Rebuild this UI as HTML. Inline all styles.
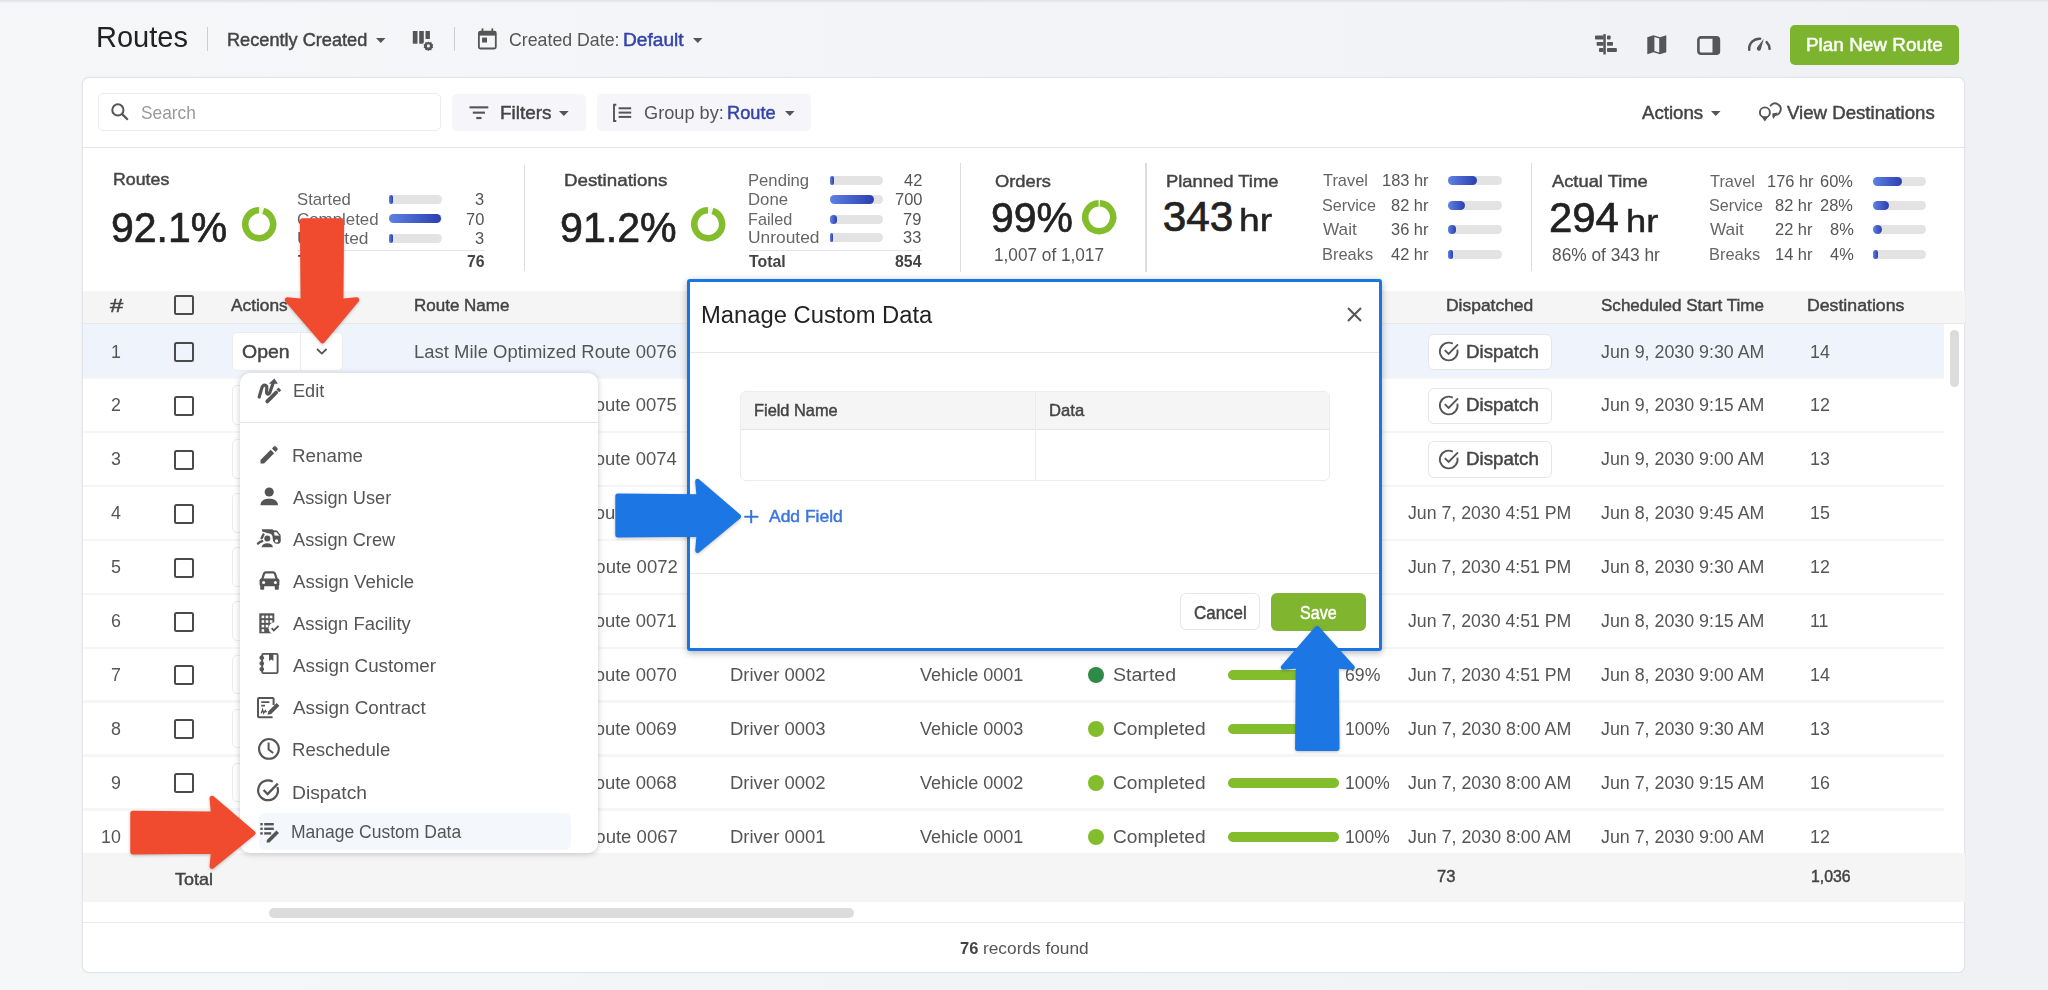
<!DOCTYPE html><html><head><meta charset="utf-8"><title>Routes</title><style>
html,body{margin:0;padding:0;width:2048px;height:990px;overflow:hidden;background:#f2f3f7;}
body{background:linear-gradient(90deg,#f6f7f9,#f3f4f7 50%,#f0f1f5);}
body{position:relative;font-family:"Liberation Sans",sans-serif;}
.t{position:absolute;white-space:nowrap;transform-origin:0 0;}
svg{position:absolute;overflow:visible}
</style></head><body>
<span class="t" style="left:95.67px;top:22px;font-size:30.00px;line-height:30.00px;font-weight:400;color:#222;transform:scaleX(0.9674)">Routes</span>
<div style="position:absolute;left:206.80px;top:27.00px;width:1.10px;height:24.00px;background:#cdced3"></div>
<span class="t" style="left:227.48px;top:32px;font-size:17.83px;line-height:17.83px;font-weight:400;-webkit-text-stroke:0.45px #444;color:#444;transform:scaleX(1.0184)">Recently Created</span>
<svg style="left:376.00px;top:38.00px;" width="9.50" height="5.00" viewBox="0 0 9.5 5"><path d="M0 0H9.5L4.75 5Z" fill="#555"/></svg>
<svg style="left:412.00px;top:30.00px;" width="22.00" height="21.00" viewBox="0 0 22 21"><rect x="0.8" y="1" width="4.7" height="12.7" fill="#555"/><rect x="7.2" y="1" width="4.6" height="12.7" fill="#555"/>
<rect x="13.5" y="1" width="4.4" height="8" fill="#555"/>
<circle cx="16.4" cy="15.7" r="5.6" fill="#f2f3f7"/>
<path d="M16.4 11.4 L17.6 12.4 L19.3 12.1 L19.8 13.7 L21.2 14.6 L20.6 16.2 L21.2 17.6 L19.7 18.6 L19.3 20.2 L17.6 19.9 L16.4 21 L15.2 19.9 L13.5 20.2 L13.1 18.6 L11.6 17.6 L12.2 16.2 L11.6 14.6 L13 13.7 L13.5 12.1 L15.2 12.4Z" fill="#555"/>
<circle cx="16.4" cy="15.9" r="1.6" fill="#f2f3f7"/></svg>
<div style="position:absolute;left:454.30px;top:27.00px;width:1.10px;height:24.30px;background:#cdced3"></div>
<svg style="left:478.00px;top:27.50px;" width="19.00" height="21.00" viewBox="0 0 19 21"><rect x="0.9" y="3.6" width="16.9" height="16.9" rx="1.5" fill="none" stroke="#555" stroke-width="1.8"/>
<rect x="0.9" y="3.4" width="16.9" height="4.2" fill="#555"/>
<rect x="3.6" y="0.4" width="1.8" height="4" fill="#555"/><rect x="13.4" y="0.4" width="1.8" height="4" fill="#555"/>
<rect x="4.1" y="9.6" width="4.9" height="4.9" fill="#555"/></svg>
<span class="t" style="left:509.31px;top:32px;font-size:17.97px;line-height:17.97px;font-weight:400;color:#555;transform:scaleX(0.9882)">Created Date:</span>
<span class="t" style="left:622.94px;top:32px;font-size:17.97px;line-height:17.97px;font-weight:400;-webkit-text-stroke:0.45px #3243a8;color:#3243a8;transform:scaleX(1.0649)">Default</span>
<svg style="left:693.00px;top:38.00px;" width="9.50" height="5.00" viewBox="0 0 9.5 5"><path d="M0 0H9.5L4.75 5Z" fill="#555"/></svg>
<svg style="left:1590.00px;top:30.00px;" width="32.00" height="28.00" viewBox="0 0 32 28"><rect x="13.3" y="4.1" width="2.5" height="20.5" rx="0.6" fill="#55565a"/>
<rect x="5" y="5.5" width="8.6" height="4" rx="0.8" fill="#55565a"/><rect x="17" y="5.5" width="3.6" height="4" rx="0.8" fill="#55565a"/>
<rect x="6.6" y="11.9" width="7" height="3.9" rx="0.8" fill="#55565a"/><rect x="17" y="11.9" width="6" height="3.9" rx="0.8" fill="#55565a"/>
<rect x="9" y="18.1" width="4.6" height="3.9" rx="0.8" fill="#55565a"/><rect x="17" y="18.1" width="9.9" height="3.9" rx="0.8" fill="#55565a"/></svg>
<svg style="left:1647.00px;top:35.00px;" width="20.00" height="20.00" viewBox="0 0 20 20"><path d="M0.3 2.3 L6.5 0.3 L13 2.3 L19.3 0.3 L19.3 17.3 L13 19.3 L6.5 17.3 L0.3 19.3Z" fill="#55565a"/>
<path d="M7.4 2.1 L12.2 3.5 L12.2 17.4 L7.4 16Z" fill="#f0f1f5"/></svg>
<svg style="left:1696.50px;top:35.50px;" width="24.00" height="19.50" viewBox="0 0 24 19.5"><rect x="1.4" y="1.4" width="20.5" height="16.3" rx="2.5" fill="none" stroke="#55565a" stroke-width="2.6"/>
<rect x="15.5" y="1.4" width="6.4" height="16.3" fill="#55565a"/></svg>
<svg style="left:1745.00px;top:34.00px;" width="30.00" height="20.00" viewBox="0 0 30 20"><path d="M4.2 15.8 A10.3 10.3 0 0 1 15.2 4.7" fill="none" stroke="#55565a" stroke-width="2.5" stroke-linecap="round"/>
<path d="M21.6 8.2 A10.3 10.3 0 0 1 24.6 14.8" fill="none" stroke="#55565a" stroke-width="2.5" stroke-linecap="round"/>
<path d="M18.8 4.8 L15.8 15.4 A2.1 2.1 0 1 1 12 13.6 Z" fill="#55565a"/></svg>
<div style="position:absolute;left:1790.00px;top:24.80px;width:169.00px;height:40.00px;background:#7cb42f;border-radius:5px"></div>
<span class="t" style="left:1805.57px;top:36px;font-size:18.41px;line-height:18.41px;font-weight:400;-webkit-text-stroke:0.45px #fff;color:#fff;transform:scaleX(1.0280)">Plan New Route</span>
<div style="position:absolute;left:0.00px;top:0.00px;width:2048.00px;height:3.00px;background:linear-gradient(#e0e1e4,#f2f3f6)"></div>
<div style="position:absolute;left:82.80px;top:77.60px;width:1881.00px;height:894.80px;background:#fff;border-radius:6px;box-shadow:0 0 0 1.3px #e4e5e9"></div>
<div style="position:absolute;left:98.30px;top:93.30px;width:342.40px;height:38.10px;box-sizing:border-box;border:1px solid #ececef;border-radius:5px;background:#fff"></div>
<svg style="left:110.50px;top:103.00px;" width="18.00" height="18.00" viewBox="0 0 18 18"><circle cx="6.9" cy="6.9" r="5.6" fill="none" stroke="#555" stroke-width="2"/><path d="M10.9 10.9 L16.8 16.8" stroke="#555" stroke-width="2.2"/></svg>
<span class="t" style="left:141.33px;top:105px;font-size:17.97px;line-height:17.97px;font-weight:400;color:#9a9a9a;transform:scaleX(0.9655)">Search</span>
<div style="position:absolute;left:452.00px;top:94.30px;width:133.70px;height:37.10px;background:#f6f6fa;border-radius:5px"></div>
<svg style="left:468.50px;top:106.00px;" width="20.00" height="14.00" viewBox="0 0 20 14"><rect x="0.5" y="0.3" width="18.8" height="2.1" fill="#555"/><rect x="3.8" y="5.6" width="12.2" height="2.1" fill="#555"/><rect x="7.3" y="10.9" width="5.2" height="2.2" fill="#555"/></svg>
<span class="t" style="left:500.14px;top:105px;font-size:17.83px;line-height:17.83px;font-weight:400;-webkit-text-stroke:0.45px #444;color:#444;transform:scaleX(1.0596)">Filters</span>
<svg style="left:559.30px;top:111.00px;" width="9.70" height="5.00" viewBox="0 0 9.7 5"><path d="M0 0H9.7L4.85 5Z" fill="#555"/></svg>
<div style="position:absolute;left:596.80px;top:94.30px;width:214.20px;height:37.10px;background:#f6f6fa;border-radius:5px"></div>
<svg style="left:613.00px;top:104.00px;" width="19.00" height="18.00" viewBox="0 0 19 18"><path d="M3.3 0.8 H1 V17 H3.3" fill="none" stroke="#555" stroke-width="1.9"/>
<rect x="5.6" y="3.3" width="12.6" height="2" fill="#555"/><rect x="5.6" y="7.6" width="12.6" height="2" fill="#555"/><rect x="5.6" y="11.9" width="12.6" height="2" fill="#555"/></svg>
<span class="t" style="left:643.99px;top:105px;font-size:17.97px;line-height:17.97px;font-weight:400;color:#555;transform:scaleX(1.0130)">Group by:</span>
<span class="t" style="left:727.49px;top:105px;font-size:17.97px;line-height:17.97px;font-weight:400;-webkit-text-stroke:0.45px #3243a8;color:#3243a8;transform:scaleX(1.0149)">Route</span>
<svg style="left:784.80px;top:111.00px;" width="9.60" height="5.00" viewBox="0 0 9.6 5"><path d="M0 0H9.6L4.8 5Z" fill="#555"/></svg>
<span class="t" style="left:1642.20px;top:105px;font-size:17.83px;line-height:17.83px;font-weight:400;-webkit-text-stroke:0.45px #444;color:#444;transform:scaleX(1.0466)">Actions</span>
<svg style="left:1710.60px;top:111.00px;" width="9.50" height="5.00" viewBox="0 0 9.5 5"><path d="M0 0H9.5L4.75 5Z" fill="#555"/></svg>
<svg style="left:1752.00px;top:98.00px;" width="34.00" height="28.00" viewBox="0 0 34 28"><circle cx="12.9" cy="14.4" r="5" fill="none" stroke="#555" stroke-width="1.9"/>
<path d="M8.6 17.4 L12.9 23.6 L17.2 17.4 C15.6 19 10.2 19 8.6 17.4Z" fill="#555"/>
<path d="M18.6 7.6 A5.7 5.7 0 1 1 22 16.8" fill="none" stroke="#555" stroke-width="1.9" stroke-linecap="round"/>
<path d="M20.3 15.6 L25.6 14.6 L21.6 20.8 C20.6 20.6 20.2 18 20.3 15.6Z" fill="#555"/></svg>
<span class="t" style="left:1787.20px;top:105px;font-size:17.83px;line-height:17.83px;font-weight:400;-webkit-text-stroke:0.45px #444;color:#444;transform:scaleX(1.0447)">View Destinations</span>
<div style="position:absolute;left:83.00px;top:147.00px;width:1882.00px;height:1.00px;background:#e4e5ea"></div>
<span class="t" style="left:113.37px;top:171px;font-size:17.25px;line-height:17.25px;font-weight:400;-webkit-text-stroke:0.45px #444;color:#444;transform:scaleX(1.0296)">Routes</span>
<span class="t" style="left:110.74px;top:206px;font-size:42.61px;line-height:42.61px;font-weight:400;-webkit-text-stroke:0.7px #222;color:#222;transform:scaleX(0.9605)">92.1%</span>
<svg style="left:241.90px;top:207.10px;" width="34.40" height="34.40" viewBox="0 0 34.4 34.4"><circle cx="17.2" cy="17.2" r="13.95" fill="none" stroke="#f3f6ee" stroke-width="6.5"/><path d="M21.28 3.86 A13.95 13.95 0 1 1 16.96 3.25" fill="none" stroke="#84bd2c" stroke-width="6.5"/></svg>
<span class="t" style="left:296.82px;top:192px;font-size:16.96px;line-height:16.96px;font-weight:400;color:#666;transform:scaleX(0.9849)">Started</span>
<div style="position:absolute;left:389.00px;top:195.10px;width:53.20px;height:9.00px;background:#e3e3e3;border-radius:4.5px"></div>
<div style="position:absolute;left:389.00px;top:195.10px;width:3.60px;height:9.00px;background:linear-gradient(90deg,#5d82e3,#2c3eb0);border-radius:4.5px"></div>
<span class="t" style="left:475.37px;top:192px;font-size:16.96px;line-height:16.96px;font-weight:400;color:#555;transform:scaleX(0.9700)">3</span>
<span class="t" style="left:296.80px;top:212px;font-size:16.96px;line-height:16.96px;font-weight:400;color:#666;transform:scaleX(0.9963)">Completed</span>
<div style="position:absolute;left:389.00px;top:214.40px;width:53.20px;height:9.00px;background:#e3e3e3;border-radius:4.5px"></div>
<div style="position:absolute;left:389.00px;top:214.40px;width:51.70px;height:9.00px;background:linear-gradient(90deg,#5d82e3,#2c3eb0);border-radius:4.5px"></div>
<span class="t" style="left:465.67px;top:212px;font-size:16.96px;line-height:16.96px;font-weight:400;color:#555;transform:scaleX(0.9700)">70</span>
<span class="t" style="left:296.77px;top:231px;font-size:16.96px;line-height:16.96px;font-weight:400;color:#666;transform:scaleX(1.0265)">Unrouted</span>
<div style="position:absolute;left:389.00px;top:233.70px;width:53.20px;height:9.00px;background:#e3e3e3;border-radius:4.5px"></div>
<div style="position:absolute;left:389.00px;top:233.70px;width:3.60px;height:9.00px;background:linear-gradient(90deg,#5d82e3,#2c3eb0);border-radius:4.5px"></div>
<span class="t" style="left:475.37px;top:231px;font-size:16.96px;line-height:16.96px;font-weight:400;color:#555;transform:scaleX(0.9700)">3</span>
<div style="position:absolute;left:297.50px;top:250.00px;width:187.00px;height:1.00px;background:#e1e5ef"></div>
<span class="t" style="left:297.80px;top:253px;font-size:16.38px;line-height:16.38px;font-weight:700;color:#444;transform:scaleX(0.9700)">Total</span>
<span class="t" style="left:466.64px;top:253px;font-size:16.38px;line-height:16.38px;font-weight:700;color:#444;transform:scaleX(0.9700)">76</span>
<div style="position:absolute;left:523.80px;top:164.50px;width:1.20px;height:106.90px;background:#dcdcdc"></div>
<span class="t" style="left:563.52px;top:172px;font-size:17.39px;line-height:17.39px;font-weight:400;-webkit-text-stroke:0.45px #444;color:#444;transform:scaleX(1.0800)">Destinations</span>
<span class="t" style="left:559.53px;top:206px;font-size:42.61px;line-height:42.61px;font-weight:400;-webkit-text-stroke:0.7px #222;color:#222;transform:scaleX(0.9655)">91.2%</span>
<svg style="left:691.30px;top:207.30px;" width="34.40" height="34.40" viewBox="0 0 34.4 34.4"><circle cx="17.2" cy="17.2" r="13.95" fill="none" stroke="#f3f6ee" stroke-width="6.5"/><path d="M21.51 3.93 A13.95 13.95 0 1 1 16.96 3.25" fill="none" stroke="#84bd2c" stroke-width="6.5"/></svg>
<span class="t" style="left:747.82px;top:173px;font-size:16.96px;line-height:16.96px;font-weight:400;color:#666;transform:scaleX(0.9833)">Pending</span>
<div style="position:absolute;left:829.60px;top:175.60px;width:53.30px;height:9.00px;background:#e3e3e3;border-radius:4.5px"></div>
<div style="position:absolute;left:829.60px;top:175.60px;width:4.70px;height:9.00px;background:linear-gradient(90deg,#5d82e3,#2c3eb0);border-radius:4.5px"></div>
<span class="t" style="left:904.44px;top:173px;font-size:16.96px;line-height:16.96px;font-weight:400;color:#555;transform:scaleX(0.9700)">42</span>
<span class="t" style="left:747.81px;top:192px;font-size:16.96px;line-height:16.96px;font-weight:400;color:#666;transform:scaleX(0.9897)">Done</span>
<div style="position:absolute;left:829.60px;top:195.10px;width:53.30px;height:9.00px;background:#e3e3e3;border-radius:4.5px"></div>
<div style="position:absolute;left:829.60px;top:195.10px;width:44.30px;height:9.00px;background:linear-gradient(90deg,#5d82e3,#2c3eb0);border-radius:4.5px"></div>
<span class="t" style="left:894.74px;top:192px;font-size:16.96px;line-height:16.96px;font-weight:400;color:#555;transform:scaleX(0.9700)">700</span>
<span class="t" style="left:747.84px;top:212px;font-size:16.96px;line-height:16.96px;font-weight:400;color:#666;transform:scaleX(0.9591)">Failed</span>
<div style="position:absolute;left:829.60px;top:214.60px;width:53.30px;height:9.00px;background:#e3e3e3;border-radius:4.5px"></div>
<div style="position:absolute;left:829.60px;top:214.60px;width:7.20px;height:9.00px;background:linear-gradient(90deg,#5d82e3,#2c3eb0);border-radius:4.5px"></div>
<span class="t" style="left:903.47px;top:212px;font-size:16.96px;line-height:16.96px;font-weight:400;color:#555;transform:scaleX(0.9700)">79</span>
<span class="t" style="left:747.77px;top:230px;font-size:16.96px;line-height:16.96px;font-weight:400;color:#666;transform:scaleX(1.0265)">Unrouted</span>
<div style="position:absolute;left:829.60px;top:233.00px;width:53.30px;height:9.00px;background:#e3e3e3;border-radius:4.5px"></div>
<div style="position:absolute;left:829.60px;top:233.00px;width:3.60px;height:9.00px;background:linear-gradient(90deg,#5d82e3,#2c3eb0);border-radius:4.5px"></div>
<span class="t" style="left:903.47px;top:230px;font-size:16.96px;line-height:16.96px;font-weight:400;color:#555;transform:scaleX(0.9700)">33</span>
<div style="position:absolute;left:748.50px;top:250.00px;width:173.50px;height:1.00px;background:#e1e5ef"></div>
<span class="t" style="left:748.80px;top:253px;font-size:16.38px;line-height:16.38px;font-weight:700;color:#444;transform:scaleX(0.9700)">Total</span>
<span class="t" style="left:894.74px;top:253px;font-size:16.38px;line-height:16.38px;font-weight:700;color:#444;transform:scaleX(0.9700)">854</span>
<div style="position:absolute;left:960.20px;top:162.70px;width:1.20px;height:109.10px;background:#dcdcdc"></div>
<span class="t" style="left:994.70px;top:173px;font-size:17.39px;line-height:17.39px;font-weight:400;-webkit-text-stroke:0.45px #444;color:#444;transform:scaleX(1.0528)">Orders</span>
<span class="t" style="left:990.95px;top:196px;font-size:43.04px;line-height:43.04px;font-weight:400;-webkit-text-stroke:0.7px #222;color:#222;transform:scaleX(0.9512)">99%</span>
<svg style="left:1082.10px;top:199.60px;" width="34.40" height="34.40" viewBox="0 0 34.4 34.4"><circle cx="17.2" cy="17.2" r="13.95" fill="none" stroke="#f3f6ee" stroke-width="6.5"/><path d="M17.81 3.26 A13.95 13.95 0 1 1 16.59 3.26" fill="none" stroke="#84bd2c" stroke-width="6.5"/></svg>
<span class="t" style="left:994.33px;top:247px;font-size:17.68px;line-height:17.68px;font-weight:400;color:#555;transform:scaleX(0.9732)">1,007 of 1,017</span>
<div style="position:absolute;left:1145.40px;top:162.70px;width:1.20px;height:109.10px;background:#dcdcdc"></div>
<span class="t" style="left:1165.54px;top:173px;font-size:17.39px;line-height:17.39px;font-weight:400;-webkit-text-stroke:0.45px #444;color:#444;transform:scaleX(1.0581)">Planned Time</span>
<span class="t" style="left:1162.80px;top:196px;font-size:42.32px;line-height:42.32px;font-weight:400;-webkit-text-stroke:0.7px #222;color:#222;transform:scaleX(1.0000)">343</span>
<span class="t" style="left:1239.30px;top:205px;font-size:31.00px;line-height:31.00px;font-weight:400;-webkit-text-stroke:0.45px #222;color:#222;transform:scaleX(1.2000)">hr</span>
<span class="t" style="left:1323.30px;top:173px;font-size:16.96px;line-height:16.96px;font-weight:400;color:#666;transform:scaleX(0.9674)">Travel</span>
<span class="t" style="left:1382.04px;top:173px;font-size:16.96px;line-height:16.96px;font-weight:400;color:#555;transform:scaleX(0.9700)">183 hr</span>
<div style="position:absolute;left:1447.90px;top:176.20px;width:53.80px;height:9.00px;background:#e3e3e3;border-radius:4.5px"></div>
<div style="position:absolute;left:1447.90px;top:176.20px;width:29.50px;height:9.00px;background:linear-gradient(90deg,#5d82e3,#2c3eb0);border-radius:4.5px"></div>
<span class="t" style="left:1322.35px;top:198px;font-size:16.96px;line-height:16.96px;font-weight:400;color:#666;transform:scaleX(0.9545)">Service</span>
<span class="t" style="left:1390.77px;top:198px;font-size:16.96px;line-height:16.96px;font-weight:400;color:#555;transform:scaleX(0.9700)">82 hr</span>
<div style="position:absolute;left:1447.90px;top:200.80px;width:53.80px;height:9.00px;background:#e3e3e3;border-radius:4.5px"></div>
<div style="position:absolute;left:1447.90px;top:200.80px;width:16.70px;height:9.00px;background:linear-gradient(90deg,#5d82e3,#2c3eb0);border-radius:4.5px"></div>
<span class="t" style="left:1323.30px;top:222px;font-size:16.96px;line-height:16.96px;font-weight:400;color:#666;transform:scaleX(1.0152)">Wait</span>
<span class="t" style="left:1390.77px;top:222px;font-size:16.96px;line-height:16.96px;font-weight:400;color:#555;transform:scaleX(0.9700)">36 hr</span>
<div style="position:absolute;left:1447.90px;top:224.90px;width:53.80px;height:9.00px;background:#e3e3e3;border-radius:4.5px"></div>
<div style="position:absolute;left:1447.90px;top:224.90px;width:8.50px;height:9.00px;background:linear-gradient(90deg,#5d82e3,#2c3eb0);border-radius:4.5px"></div>
<span class="t" style="left:1322.33px;top:247px;font-size:16.96px;line-height:16.96px;font-weight:400;color:#666;transform:scaleX(0.9706)">Breaks</span>
<span class="t" style="left:1390.77px;top:247px;font-size:16.96px;line-height:16.96px;font-weight:400;color:#555;transform:scaleX(0.9700)">42 hr</span>
<div style="position:absolute;left:1447.90px;top:249.80px;width:53.80px;height:9.00px;background:#e3e3e3;border-radius:4.5px"></div>
<div style="position:absolute;left:1447.90px;top:249.80px;width:4.80px;height:9.00px;background:linear-gradient(90deg,#5d82e3,#2c3eb0);border-radius:4.5px"></div>
<div style="position:absolute;left:1531.00px;top:162.90px;width:1.20px;height:108.30px;background:#dcdcdc"></div>
<span class="t" style="left:1552.20px;top:173px;font-size:17.39px;line-height:17.39px;font-weight:400;-webkit-text-stroke:0.45px #444;color:#444;transform:scaleX(1.0538)">Actual Time</span>
<span class="t" style="left:1549.41px;top:197px;font-size:42.32px;line-height:42.32px;font-weight:400;-webkit-text-stroke:0.7px #222;color:#222;transform:scaleX(0.9899)">294</span>
<span class="t" style="left:1625.96px;top:206px;font-size:31.00px;line-height:31.00px;font-weight:400;-webkit-text-stroke:0.45px #222;color:#222;transform:scaleX(1.1692)">hr</span>
<span class="t" style="left:1552.20px;top:247px;font-size:17.68px;line-height:17.68px;font-weight:400;color:#555;transform:scaleX(0.9800)">86% of 343 hr</span>
<span class="t" style="left:1710.30px;top:174px;font-size:16.96px;line-height:16.96px;font-weight:400;color:#666;transform:scaleX(0.9674)">Travel</span>
<span class="t" style="left:1766.54px;top:174px;font-size:16.96px;line-height:16.96px;font-weight:400;color:#555;transform:scaleX(0.9700)">176 hr</span>
<span class="t" style="left:1820.12px;top:174px;font-size:16.96px;line-height:16.96px;font-weight:400;color:#555;transform:scaleX(0.9700)">60%</span>
<div style="position:absolute;left:1873.20px;top:176.90px;width:53.30px;height:9.00px;background:#e3e3e3;border-radius:4.5px"></div>
<div style="position:absolute;left:1873.20px;top:176.90px;width:28.70px;height:9.00px;background:linear-gradient(90deg,#5d82e3,#2c3eb0);border-radius:4.5px"></div>
<span class="t" style="left:1709.35px;top:198px;font-size:16.96px;line-height:16.96px;font-weight:400;color:#666;transform:scaleX(0.9545)">Service</span>
<span class="t" style="left:1775.27px;top:198px;font-size:16.96px;line-height:16.96px;font-weight:400;color:#555;transform:scaleX(0.9700)">82 hr</span>
<span class="t" style="left:1820.12px;top:198px;font-size:16.96px;line-height:16.96px;font-weight:400;color:#555;transform:scaleX(0.9700)">28%</span>
<div style="position:absolute;left:1873.20px;top:201.30px;width:53.30px;height:9.00px;background:#e3e3e3;border-radius:4.5px"></div>
<div style="position:absolute;left:1873.20px;top:201.30px;width:16.20px;height:9.00px;background:linear-gradient(90deg,#5d82e3,#2c3eb0);border-radius:4.5px"></div>
<span class="t" style="left:1710.30px;top:222px;font-size:16.96px;line-height:16.96px;font-weight:400;color:#666;transform:scaleX(1.0152)">Wait</span>
<span class="t" style="left:1775.27px;top:222px;font-size:16.96px;line-height:16.96px;font-weight:400;color:#555;transform:scaleX(0.9700)">22 hr</span>
<span class="t" style="left:1829.82px;top:222px;font-size:16.96px;line-height:16.96px;font-weight:400;color:#555;transform:scaleX(0.9700)">8%</span>
<div style="position:absolute;left:1873.20px;top:225.00px;width:53.30px;height:9.00px;background:#e3e3e3;border-radius:4.5px"></div>
<div style="position:absolute;left:1873.20px;top:225.00px;width:9.00px;height:9.00px;background:linear-gradient(90deg,#5d82e3,#2c3eb0);border-radius:4.5px"></div>
<span class="t" style="left:1709.33px;top:247px;font-size:16.96px;line-height:16.96px;font-weight:400;color:#666;transform:scaleX(0.9706)">Breaks</span>
<span class="t" style="left:1775.27px;top:247px;font-size:16.96px;line-height:16.96px;font-weight:400;color:#555;transform:scaleX(0.9700)">14 hr</span>
<span class="t" style="left:1829.82px;top:247px;font-size:16.96px;line-height:16.96px;font-weight:400;color:#555;transform:scaleX(0.9700)">4%</span>
<div style="position:absolute;left:1873.20px;top:249.50px;width:53.30px;height:9.00px;background:#e3e3e3;border-radius:4.5px"></div>
<div style="position:absolute;left:1873.20px;top:249.50px;width:5.20px;height:9.00px;background:linear-gradient(90deg,#5d82e3,#2c3eb0);border-radius:4.5px"></div>
<div style="position:absolute;left:83.00px;top:290.50px;width:1881.50px;height:33.00px;background:#f5f5f5"></div>
<div style="position:absolute;left:83.00px;top:323.00px;width:1881.50px;height:1.30px;background:#e9e9e9"></div>
<span class="t" style="left:109.63px;top:298px;font-size:17.83px;line-height:17.83px;font-weight:400;-webkit-text-stroke:0.45px #444;color:#444;transform:scaleX(1.3333)">#</span>
<div style="position:absolute;left:173.70px;top:294.80px;width:20.00px;height:20.00px;box-sizing:border-box;border:2px solid #4a4a4a;border-radius:2.5px"></div>
<span class="t" style="left:230.80px;top:298px;font-size:16.52px;line-height:16.52px;font-weight:400;-webkit-text-stroke:0.45px #444;color:#444;transform:scaleX(1.0463)">Actions</span>
<span class="t" style="left:413.87px;top:298px;font-size:16.52px;line-height:16.52px;font-weight:400;-webkit-text-stroke:0.45px #444;color:#444;transform:scaleX(1.0293)">Route Name</span>
<span class="t" style="left:1445.94px;top:298px;font-size:16.52px;line-height:16.52px;font-weight:400;-webkit-text-stroke:0.45px #444;color:#444;transform:scaleX(1.0556)">Dispatched</span>
<span class="t" style="left:1600.60px;top:298px;font-size:16.52px;line-height:16.52px;font-weight:400;-webkit-text-stroke:0.45px #444;color:#444;transform:scaleX(1.0316)">Scheduled Start Time</span>
<span class="t" style="left:1806.53px;top:298px;font-size:16.52px;line-height:16.52px;font-weight:400;-webkit-text-stroke:0.45px #444;color:#444;transform:scaleX(1.0711)">Destinations</span>
<div style="position:absolute;left:83px;top:324.3px;width:1882px;height:529px;overflow:hidden">
<div style="position:absolute;left:-83px;top:-324.3px;width:2048px;height:990px">
<div style="position:absolute;left:83.00px;top:324.30px;width:1861.00px;height:53.90px;background:#eff4fc"></div>
<div style="position:absolute;left:83.00px;top:377.00px;width:1861.00px;height:2.40px;background:#f6f6f6"></div>
<span class="t" style="left:111.10px;top:343px;font-size:18.41px;line-height:18.41px;font-weight:400;color:#555;transform:scaleX(0.9700)">1</span>
<div style="position:absolute;left:173.70px;top:342.00px;width:20.00px;height:20.00px;box-sizing:border-box;border:2px solid #4a4a4a;border-radius:2.5px"></div>
<div style="position:absolute;left:231.50px;top:331.50px;width:111.50px;height:39.50px;box-sizing:border-box;background:#fff;border:1px solid #ececec;border-radius:5px"></div>
<div style="position:absolute;left:300.00px;top:331.50px;width:1.00px;height:39.50px;background:#ececec"></div>
<span class="t" style="left:241.60px;top:343px;font-size:18.84px;line-height:18.84px;font-weight:400;-webkit-text-stroke:0.45px #444;color:#444;transform:scaleX(1.0333)">Open</span>
<svg style="left:316.00px;top:348.30px;" width="12.00" height="7.00" viewBox="0 0 12 7"><path d="M1 1 L5.8 5.6 L10.6 1" fill="none" stroke="#555" stroke-width="1.8"/></svg>
<span class="t" style="left:413.90px;top:343px;font-size:18.41px;line-height:18.41px;font-weight:400;color:#555;transform:scaleX(1.0034)">Last Mile Optimized Route 0076</span>
<div style="position:absolute;left:1428.20px;top:333.60px;width:124.20px;height:36.40px;box-sizing:border-box;background:#fff;border:1px solid #e6e6e6;border-radius:6px"></div>
<svg style="left:1439.00px;top:341.30px;" width="21.00" height="21.00" viewBox="0 0 21 21"><path d="M18.4 8.6 A8.9 8.9 0 1 1 13.8 2.6" fill="none" stroke="#555" stroke-width="1.8"/><path d="M5.8 9.2 L9.6 13 L19 3.4" fill="none" stroke="#555" stroke-width="1.9"/></svg>
<span class="t" style="left:1465.98px;top:343px;font-size:18.41px;line-height:18.41px;font-weight:400;-webkit-text-stroke:0.45px #444;color:#444;transform:scaleX(1.0171)">Dispatch</span>
<span class="t" style="left:1600.60px;top:343px;font-size:18.41px;line-height:18.41px;font-weight:400;color:#555;transform:scaleX(0.9679)">Jun 9, 2030 9:30 AM</span>
<span class="t" style="left:1810.43px;top:343px;font-size:18.41px;line-height:18.41px;font-weight:400;color:#555;transform:scaleX(0.9700)">14</span>
<div style="position:absolute;left:83.00px;top:430.90px;width:1861.00px;height:2.40px;background:#f6f6f6"></div>
<span class="t" style="left:111.10px;top:396px;font-size:18.41px;line-height:18.41px;font-weight:400;color:#555;transform:scaleX(0.9700)">2</span>
<div style="position:absolute;left:173.70px;top:395.90px;width:20.00px;height:20.00px;box-sizing:border-box;border:2px solid #4a4a4a;border-radius:2.5px"></div>
<div style="position:absolute;left:231.50px;top:385.40px;width:111.50px;height:39.50px;box-sizing:border-box;background:#fff;border:1px solid #ececec;border-radius:5px"></div>
<div style="position:absolute;left:300.00px;top:385.40px;width:1.00px;height:39.50px;background:#ececec"></div>
<span class="t" style="left:241.60px;top:396px;font-size:18.84px;line-height:18.84px;font-weight:400;-webkit-text-stroke:0.45px #444;color:#444;transform:scaleX(1.0333)">Open</span>
<svg style="left:316.00px;top:402.20px;" width="12.00" height="7.00" viewBox="0 0 12 7"><path d="M1 1 L5.8 5.6 L10.6 1" fill="none" stroke="#555" stroke-width="1.8"/></svg>
<span class="t" style="left:413.90px;top:396px;font-size:18.41px;line-height:18.41px;font-weight:400;color:#555;transform:scaleX(1.0034)">Last Mile Optimized Route 0075</span>
<div style="position:absolute;left:1428.20px;top:387.50px;width:124.20px;height:36.40px;box-sizing:border-box;background:#fff;border:1px solid #e6e6e6;border-radius:6px"></div>
<svg style="left:1439.00px;top:395.20px;" width="21.00" height="21.00" viewBox="0 0 21 21"><path d="M18.4 8.6 A8.9 8.9 0 1 1 13.8 2.6" fill="none" stroke="#555" stroke-width="1.8"/><path d="M5.8 9.2 L9.6 13 L19 3.4" fill="none" stroke="#555" stroke-width="1.9"/></svg>
<span class="t" style="left:1465.98px;top:396px;font-size:18.41px;line-height:18.41px;font-weight:400;-webkit-text-stroke:0.45px #444;color:#444;transform:scaleX(1.0171)">Dispatch</span>
<span class="t" style="left:1600.60px;top:396px;font-size:18.41px;line-height:18.41px;font-weight:400;color:#555;transform:scaleX(0.9679)">Jun 9, 2030 9:15 AM</span>
<span class="t" style="left:1810.43px;top:396px;font-size:18.41px;line-height:18.41px;font-weight:400;color:#555;transform:scaleX(0.9700)">12</span>
<div style="position:absolute;left:83.00px;top:484.80px;width:1861.00px;height:2.40px;background:#f6f6f6"></div>
<span class="t" style="left:111.10px;top:450px;font-size:18.41px;line-height:18.41px;font-weight:400;color:#555;transform:scaleX(0.9700)">3</span>
<div style="position:absolute;left:173.70px;top:449.80px;width:20.00px;height:20.00px;box-sizing:border-box;border:2px solid #4a4a4a;border-radius:2.5px"></div>
<div style="position:absolute;left:231.50px;top:439.30px;width:111.50px;height:39.50px;box-sizing:border-box;background:#fff;border:1px solid #ececec;border-radius:5px"></div>
<div style="position:absolute;left:300.00px;top:439.30px;width:1.00px;height:39.50px;background:#ececec"></div>
<span class="t" style="left:241.60px;top:450px;font-size:18.84px;line-height:18.84px;font-weight:400;-webkit-text-stroke:0.45px #444;color:#444;transform:scaleX(1.0333)">Open</span>
<svg style="left:316.00px;top:456.10px;" width="12.00" height="7.00" viewBox="0 0 12 7"><path d="M1 1 L5.8 5.6 L10.6 1" fill="none" stroke="#555" stroke-width="1.8"/></svg>
<span class="t" style="left:413.90px;top:450px;font-size:18.41px;line-height:18.41px;font-weight:400;color:#555;transform:scaleX(1.0034)">Last Mile Optimized Route 0074</span>
<div style="position:absolute;left:1428.20px;top:441.40px;width:124.20px;height:36.40px;box-sizing:border-box;background:#fff;border:1px solid #e6e6e6;border-radius:6px"></div>
<svg style="left:1439.00px;top:449.10px;" width="21.00" height="21.00" viewBox="0 0 21 21"><path d="M18.4 8.6 A8.9 8.9 0 1 1 13.8 2.6" fill="none" stroke="#555" stroke-width="1.8"/><path d="M5.8 9.2 L9.6 13 L19 3.4" fill="none" stroke="#555" stroke-width="1.9"/></svg>
<span class="t" style="left:1465.98px;top:450px;font-size:18.41px;line-height:18.41px;font-weight:400;-webkit-text-stroke:0.45px #444;color:#444;transform:scaleX(1.0171)">Dispatch</span>
<span class="t" style="left:1600.60px;top:450px;font-size:18.41px;line-height:18.41px;font-weight:400;color:#555;transform:scaleX(0.9679)">Jun 9, 2030 9:00 AM</span>
<span class="t" style="left:1810.43px;top:450px;font-size:18.41px;line-height:18.41px;font-weight:400;color:#555;transform:scaleX(0.9700)">13</span>
<div style="position:absolute;left:83.00px;top:538.70px;width:1861.00px;height:2.40px;background:#f6f6f6"></div>
<span class="t" style="left:111.10px;top:504px;font-size:18.41px;line-height:18.41px;font-weight:400;color:#555;transform:scaleX(0.9700)">4</span>
<div style="position:absolute;left:173.70px;top:503.70px;width:20.00px;height:20.00px;box-sizing:border-box;border:2px solid #4a4a4a;border-radius:2.5px"></div>
<div style="position:absolute;left:231.50px;top:493.20px;width:111.50px;height:39.50px;box-sizing:border-box;background:#fff;border:1px solid #ececec;border-radius:5px"></div>
<div style="position:absolute;left:300.00px;top:493.20px;width:1.00px;height:39.50px;background:#ececec"></div>
<span class="t" style="left:241.60px;top:504px;font-size:18.84px;line-height:18.84px;font-weight:400;-webkit-text-stroke:0.45px #444;color:#444;transform:scaleX(1.0333)">Open</span>
<svg style="left:316.00px;top:510.00px;" width="12.00" height="7.00" viewBox="0 0 12 7"><path d="M1 1 L5.8 5.6 L10.6 1" fill="none" stroke="#555" stroke-width="1.8"/></svg>
<span class="t" style="left:413.90px;top:504px;font-size:18.41px;line-height:18.41px;font-weight:400;color:#555;transform:scaleX(1.0034)">Last Mile Optimized Route 0073</span>
<span class="t" style="left:1408.20px;top:504px;font-size:18.41px;line-height:18.41px;font-weight:400;color:#555;transform:scaleX(0.9615)">Jun 7, 2030 4:51 PM</span>
<span class="t" style="left:1600.60px;top:504px;font-size:18.41px;line-height:18.41px;font-weight:400;color:#555;transform:scaleX(0.9679)">Jun 8, 2030 9:45 AM</span>
<span class="t" style="left:1810.43px;top:504px;font-size:18.41px;line-height:18.41px;font-weight:400;color:#555;transform:scaleX(0.9700)">15</span>
<div style="position:absolute;left:83.00px;top:592.60px;width:1861.00px;height:2.40px;background:#f6f6f6"></div>
<span class="t" style="left:111.10px;top:558px;font-size:18.41px;line-height:18.41px;font-weight:400;color:#555;transform:scaleX(0.9700)">5</span>
<div style="position:absolute;left:173.70px;top:557.60px;width:20.00px;height:20.00px;box-sizing:border-box;border:2px solid #4a4a4a;border-radius:2.5px"></div>
<div style="position:absolute;left:231.50px;top:547.10px;width:111.50px;height:39.50px;box-sizing:border-box;background:#fff;border:1px solid #ececec;border-radius:5px"></div>
<div style="position:absolute;left:300.00px;top:547.10px;width:1.00px;height:39.50px;background:#ececec"></div>
<span class="t" style="left:241.60px;top:558px;font-size:18.84px;line-height:18.84px;font-weight:400;-webkit-text-stroke:0.45px #444;color:#444;transform:scaleX(1.0333)">Open</span>
<svg style="left:316.00px;top:563.90px;" width="12.00" height="7.00" viewBox="0 0 12 7"><path d="M1 1 L5.8 5.6 L10.6 1" fill="none" stroke="#555" stroke-width="1.8"/></svg>
<span class="t" style="left:413.89px;top:558px;font-size:18.41px;line-height:18.41px;font-weight:400;color:#555;transform:scaleX(1.0073)">Last Mile Optimized Route 0072</span>
<span class="t" style="left:1408.20px;top:558px;font-size:18.41px;line-height:18.41px;font-weight:400;color:#555;transform:scaleX(0.9615)">Jun 7, 2030 4:51 PM</span>
<span class="t" style="left:1600.60px;top:558px;font-size:18.41px;line-height:18.41px;font-weight:400;color:#555;transform:scaleX(0.9679)">Jun 8, 2030 9:30 AM</span>
<span class="t" style="left:1810.43px;top:558px;font-size:18.41px;line-height:18.41px;font-weight:400;color:#555;transform:scaleX(0.9700)">12</span>
<div style="position:absolute;left:83.00px;top:646.50px;width:1861.00px;height:2.40px;background:#f6f6f6"></div>
<span class="t" style="left:111.10px;top:612px;font-size:18.41px;line-height:18.41px;font-weight:400;color:#555;transform:scaleX(0.9700)">6</span>
<div style="position:absolute;left:173.70px;top:611.50px;width:20.00px;height:20.00px;box-sizing:border-box;border:2px solid #4a4a4a;border-radius:2.5px"></div>
<div style="position:absolute;left:231.50px;top:601.00px;width:111.50px;height:39.50px;box-sizing:border-box;background:#fff;border:1px solid #ececec;border-radius:5px"></div>
<div style="position:absolute;left:300.00px;top:601.00px;width:1.00px;height:39.50px;background:#ececec"></div>
<span class="t" style="left:241.60px;top:612px;font-size:18.84px;line-height:18.84px;font-weight:400;-webkit-text-stroke:0.45px #444;color:#444;transform:scaleX(1.0333)">Open</span>
<svg style="left:316.00px;top:617.80px;" width="12.00" height="7.00" viewBox="0 0 12 7"><path d="M1 1 L5.8 5.6 L10.6 1" fill="none" stroke="#555" stroke-width="1.8"/></svg>
<span class="t" style="left:413.90px;top:612px;font-size:18.41px;line-height:18.41px;font-weight:400;color:#555;transform:scaleX(1.0034)">Last Mile Optimized Route 0071</span>
<span class="t" style="left:1408.20px;top:612px;font-size:18.41px;line-height:18.41px;font-weight:400;color:#555;transform:scaleX(0.9615)">Jun 7, 2030 4:51 PM</span>
<span class="t" style="left:1600.60px;top:612px;font-size:18.41px;line-height:18.41px;font-weight:400;color:#555;transform:scaleX(0.9679)">Jun 8, 2030 9:15 AM</span>
<span class="t" style="left:1810.43px;top:612px;font-size:18.41px;line-height:18.41px;font-weight:400;color:#555;transform:scaleX(0.9700)">11</span>
<div style="position:absolute;left:83.00px;top:700.40px;width:1861.00px;height:2.40px;background:#f6f6f6"></div>
<span class="t" style="left:111.10px;top:666px;font-size:18.41px;line-height:18.41px;font-weight:400;color:#555;transform:scaleX(0.9700)">7</span>
<div style="position:absolute;left:173.70px;top:665.40px;width:20.00px;height:20.00px;box-sizing:border-box;border:2px solid #4a4a4a;border-radius:2.5px"></div>
<div style="position:absolute;left:231.50px;top:654.90px;width:111.50px;height:39.50px;box-sizing:border-box;background:#fff;border:1px solid #ececec;border-radius:5px"></div>
<div style="position:absolute;left:300.00px;top:654.90px;width:1.00px;height:39.50px;background:#ececec"></div>
<span class="t" style="left:241.60px;top:666px;font-size:18.84px;line-height:18.84px;font-weight:400;-webkit-text-stroke:0.45px #444;color:#444;transform:scaleX(1.0333)">Open</span>
<svg style="left:316.00px;top:671.70px;" width="12.00" height="7.00" viewBox="0 0 12 7"><path d="M1 1 L5.8 5.6 L10.6 1" fill="none" stroke="#555" stroke-width="1.8"/></svg>
<span class="t" style="left:413.90px;top:666px;font-size:18.41px;line-height:18.41px;font-weight:400;color:#555;transform:scaleX(1.0034)">Last Mile Optimized Route 0070</span>
<span class="t" style="left:729.90px;top:666px;font-size:18.41px;line-height:18.41px;font-weight:400;color:#555;transform:scaleX(1.0043)">Driver 0002</span>
<span class="t" style="left:920.30px;top:666px;font-size:18.41px;line-height:18.41px;font-weight:400;color:#555;transform:scaleX(0.9810)">Vehicle 0001</span>
<div style="position:absolute;left:1088.00px;top:666.90px;width:16.00px;height:16.00px;background:#2f8a47;border-radius:50%"></div>
<span class="t" style="left:1112.54px;top:666px;font-size:18.41px;line-height:18.41px;font-weight:400;color:#555;transform:scaleX(1.0632)">Started</span>
<div style="position:absolute;left:1228.30px;top:669.80px;width:110.70px;height:10.20px;background:#e6e6e6;border-radius:5px"></div>
<div style="position:absolute;left:1228.30px;top:669.80px;width:76.38px;height:10.20px;background:#84bd2c;border-radius:5px"></div>
<span class="t" style="left:1344.54px;top:666px;font-size:18.41px;line-height:18.41px;font-weight:400;color:#555;transform:scaleX(0.9611)">69%</span>
<span class="t" style="left:1408.20px;top:666px;font-size:18.41px;line-height:18.41px;font-weight:400;color:#555;transform:scaleX(0.9615)">Jun 7, 2030 4:51 PM</span>
<span class="t" style="left:1600.60px;top:666px;font-size:18.41px;line-height:18.41px;font-weight:400;color:#555;transform:scaleX(0.9679)">Jun 8, 2030 9:00 AM</span>
<span class="t" style="left:1810.43px;top:666px;font-size:18.41px;line-height:18.41px;font-weight:400;color:#555;transform:scaleX(0.9700)">14</span>
<div style="position:absolute;left:83.00px;top:754.30px;width:1861.00px;height:2.40px;background:#f6f6f6"></div>
<span class="t" style="left:111.10px;top:720px;font-size:18.41px;line-height:18.41px;font-weight:400;color:#555;transform:scaleX(0.9700)">8</span>
<div style="position:absolute;left:173.70px;top:719.30px;width:20.00px;height:20.00px;box-sizing:border-box;border:2px solid #4a4a4a;border-radius:2.5px"></div>
<div style="position:absolute;left:231.50px;top:708.80px;width:111.50px;height:39.50px;box-sizing:border-box;background:#fff;border:1px solid #ececec;border-radius:5px"></div>
<div style="position:absolute;left:300.00px;top:708.80px;width:1.00px;height:39.50px;background:#ececec"></div>
<span class="t" style="left:241.60px;top:720px;font-size:18.84px;line-height:18.84px;font-weight:400;-webkit-text-stroke:0.45px #444;color:#444;transform:scaleX(1.0333)">Open</span>
<svg style="left:316.00px;top:725.60px;" width="12.00" height="7.00" viewBox="0 0 12 7"><path d="M1 1 L5.8 5.6 L10.6 1" fill="none" stroke="#555" stroke-width="1.8"/></svg>
<span class="t" style="left:413.90px;top:720px;font-size:18.41px;line-height:18.41px;font-weight:400;color:#555;transform:scaleX(1.0034)">Last Mile Optimized Route 0069</span>
<span class="t" style="left:729.90px;top:720px;font-size:18.41px;line-height:18.41px;font-weight:400;color:#555;transform:scaleX(1.0043)">Driver 0003</span>
<span class="t" style="left:920.30px;top:720px;font-size:18.41px;line-height:18.41px;font-weight:400;color:#555;transform:scaleX(0.9810)">Vehicle 0003</span>
<div style="position:absolute;left:1088.00px;top:720.80px;width:16.00px;height:16.00px;background:#84bd2c;border-radius:50%"></div>
<span class="t" style="left:1112.56px;top:720px;font-size:18.41px;line-height:18.41px;font-weight:400;color:#555;transform:scaleX(1.0402)">Completed</span>
<div style="position:absolute;left:1228.30px;top:723.70px;width:110.70px;height:10.20px;background:#e6e6e6;border-radius:5px"></div>
<div style="position:absolute;left:1228.30px;top:723.70px;width:110.70px;height:10.20px;background:#84bd2c;border-radius:5px"></div>
<span class="t" style="left:1344.55px;top:720px;font-size:18.41px;line-height:18.41px;font-weight:400;color:#555;transform:scaleX(0.9500)">100%</span>
<span class="t" style="left:1408.20px;top:720px;font-size:18.41px;line-height:18.41px;font-weight:400;color:#555;transform:scaleX(0.9673)">Jun 7, 2030 8:00 AM</span>
<span class="t" style="left:1600.60px;top:720px;font-size:18.41px;line-height:18.41px;font-weight:400;color:#555;transform:scaleX(0.9679)">Jun 7, 2030 9:30 AM</span>
<span class="t" style="left:1810.43px;top:720px;font-size:18.41px;line-height:18.41px;font-weight:400;color:#555;transform:scaleX(0.9700)">13</span>
<div style="position:absolute;left:83.00px;top:808.20px;width:1861.00px;height:2.40px;background:#f6f6f6"></div>
<span class="t" style="left:111.10px;top:774px;font-size:18.41px;line-height:18.41px;font-weight:400;color:#555;transform:scaleX(0.9700)">9</span>
<div style="position:absolute;left:173.70px;top:773.20px;width:20.00px;height:20.00px;box-sizing:border-box;border:2px solid #4a4a4a;border-radius:2.5px"></div>
<div style="position:absolute;left:231.50px;top:762.70px;width:111.50px;height:39.50px;box-sizing:border-box;background:#fff;border:1px solid #ececec;border-radius:5px"></div>
<div style="position:absolute;left:300.00px;top:762.70px;width:1.00px;height:39.50px;background:#ececec"></div>
<span class="t" style="left:241.60px;top:774px;font-size:18.84px;line-height:18.84px;font-weight:400;-webkit-text-stroke:0.45px #444;color:#444;transform:scaleX(1.0333)">Open</span>
<svg style="left:316.00px;top:779.50px;" width="12.00" height="7.00" viewBox="0 0 12 7"><path d="M1 1 L5.8 5.6 L10.6 1" fill="none" stroke="#555" stroke-width="1.8"/></svg>
<span class="t" style="left:413.90px;top:774px;font-size:18.41px;line-height:18.41px;font-weight:400;color:#555;transform:scaleX(1.0034)">Last Mile Optimized Route 0068</span>
<span class="t" style="left:729.90px;top:774px;font-size:18.41px;line-height:18.41px;font-weight:400;color:#555;transform:scaleX(1.0043)">Driver 0002</span>
<span class="t" style="left:920.30px;top:774px;font-size:18.41px;line-height:18.41px;font-weight:400;color:#555;transform:scaleX(0.9810)">Vehicle 0002</span>
<div style="position:absolute;left:1088.00px;top:774.70px;width:16.00px;height:16.00px;background:#84bd2c;border-radius:50%"></div>
<span class="t" style="left:1112.56px;top:774px;font-size:18.41px;line-height:18.41px;font-weight:400;color:#555;transform:scaleX(1.0402)">Completed</span>
<div style="position:absolute;left:1228.30px;top:777.60px;width:110.70px;height:10.20px;background:#e6e6e6;border-radius:5px"></div>
<div style="position:absolute;left:1228.30px;top:777.60px;width:110.70px;height:10.20px;background:#84bd2c;border-radius:5px"></div>
<span class="t" style="left:1344.55px;top:774px;font-size:18.41px;line-height:18.41px;font-weight:400;color:#555;transform:scaleX(0.9500)">100%</span>
<span class="t" style="left:1408.20px;top:774px;font-size:18.41px;line-height:18.41px;font-weight:400;color:#555;transform:scaleX(0.9673)">Jun 7, 2030 8:00 AM</span>
<span class="t" style="left:1600.60px;top:774px;font-size:18.41px;line-height:18.41px;font-weight:400;color:#555;transform:scaleX(0.9679)">Jun 7, 2030 9:15 AM</span>
<span class="t" style="left:1810.43px;top:774px;font-size:18.41px;line-height:18.41px;font-weight:400;color:#555;transform:scaleX(0.9700)">16</span>
<div style="position:absolute;left:83.00px;top:862.10px;width:1861.00px;height:2.40px;background:#f6f6f6"></div>
<span class="t" style="left:101.40px;top:828px;font-size:18.41px;line-height:18.41px;font-weight:400;color:#555;transform:scaleX(0.9700)">10</span>
<div style="position:absolute;left:173.70px;top:827.10px;width:20.00px;height:20.00px;box-sizing:border-box;border:2px solid #4a4a4a;border-radius:2.5px"></div>
<div style="position:absolute;left:231.50px;top:816.60px;width:111.50px;height:39.50px;box-sizing:border-box;background:#fff;border:1px solid #ececec;border-radius:5px"></div>
<div style="position:absolute;left:300.00px;top:816.60px;width:1.00px;height:39.50px;background:#ececec"></div>
<span class="t" style="left:241.60px;top:828px;font-size:18.84px;line-height:18.84px;font-weight:400;-webkit-text-stroke:0.45px #444;color:#444;transform:scaleX(1.0333)">Open</span>
<svg style="left:316.00px;top:833.40px;" width="12.00" height="7.00" viewBox="0 0 12 7"><path d="M1 1 L5.8 5.6 L10.6 1" fill="none" stroke="#555" stroke-width="1.8"/></svg>
<span class="t" style="left:413.89px;top:828px;font-size:18.41px;line-height:18.41px;font-weight:400;color:#555;transform:scaleX(1.0073)">Last Mile Optimized Route 0067</span>
<span class="t" style="left:729.90px;top:828px;font-size:18.41px;line-height:18.41px;font-weight:400;color:#555;transform:scaleX(1.0043)">Driver 0001</span>
<span class="t" style="left:920.30px;top:828px;font-size:18.41px;line-height:18.41px;font-weight:400;color:#555;transform:scaleX(0.9810)">Vehicle 0001</span>
<div style="position:absolute;left:1088.00px;top:828.60px;width:16.00px;height:16.00px;background:#84bd2c;border-radius:50%"></div>
<span class="t" style="left:1112.56px;top:828px;font-size:18.41px;line-height:18.41px;font-weight:400;color:#555;transform:scaleX(1.0402)">Completed</span>
<div style="position:absolute;left:1228.30px;top:831.50px;width:110.70px;height:10.20px;background:#e6e6e6;border-radius:5px"></div>
<div style="position:absolute;left:1228.30px;top:831.50px;width:110.70px;height:10.20px;background:#84bd2c;border-radius:5px"></div>
<span class="t" style="left:1344.55px;top:828px;font-size:18.41px;line-height:18.41px;font-weight:400;color:#555;transform:scaleX(0.9500)">100%</span>
<span class="t" style="left:1408.20px;top:828px;font-size:18.41px;line-height:18.41px;font-weight:400;color:#555;transform:scaleX(0.9673)">Jun 7, 2030 8:00 AM</span>
<span class="t" style="left:1600.60px;top:828px;font-size:18.41px;line-height:18.41px;font-weight:400;color:#555;transform:scaleX(0.9679)">Jun 7, 2030 9:00 AM</span>
<span class="t" style="left:1810.43px;top:828px;font-size:18.41px;line-height:18.41px;font-weight:400;color:#555;transform:scaleX(0.9700)">12</span>
</div></div>
<div style="position:absolute;left:1950.00px;top:329.70px;width:9.40px;height:57.80px;background:#dcdcdc;border-radius:5px"></div>
<div style="position:absolute;left:83.00px;top:853.30px;width:1881.50px;height:49.20px;background:#f5f5f5"></div>
<span class="t" style="left:174.50px;top:871px;font-size:17.39px;line-height:17.39px;font-weight:400;-webkit-text-stroke:0.45px #444;color:#444;transform:scaleX(1.0333)">Total</span>
<span class="t" style="left:1437.10px;top:869px;font-size:15.80px;line-height:15.80px;font-weight:400;-webkit-text-stroke:0.45px #444;color:#444;transform:scaleX(1.0471)">73</span>
<span class="t" style="left:1811.10px;top:869px;font-size:15.80px;line-height:15.80px;font-weight:400;-webkit-text-stroke:0.45px #444;color:#444;transform:scaleX(1.0026)">1,036</span>
<div style="position:absolute;left:268.70px;top:908.00px;width:585.00px;height:9.60px;background:#dcdcdc;border-radius:5px"></div>
<div style="position:absolute;left:83.00px;top:922.00px;width:1881.50px;height:1.00px;background:#ebebeb"></div>
<span class="t" style="left:960.40px;top:941px;font-size:16.67px;line-height:16.67px;font-weight:700;color:#444;transform:scaleX(0.9889)">76</span>
<span class="t" style="left:982.56px;top:941px;font-size:16.67px;line-height:16.67px;font-weight:400;color:#555;transform:scaleX(1.0380)">records found</span>
<div style="position:absolute;left:240.00px;top:372.50px;width:358.20px;height:480.30px;background:#fff;border-radius:10px;box-shadow:0 1px 6px rgba(0,0,0,0.22)"></div>
<div style="position:absolute;left:240.00px;top:422.00px;width:358.20px;height:1.20px;background:#e6e6e6"></div>
<div style="position:absolute;left:258.60px;top:812.90px;width:312.60px;height:37.10px;background:#f4f7fc;border-radius:6px"></div>
<span class="t" style="left:292.97px;top:383px;font-size:17.68px;line-height:17.68px;font-weight:400;color:#555;transform:scaleX(1.0267)">Edit</span>
<span class="t" style="left:292.34px;top:448px;font-size:17.68px;line-height:17.68px;font-weight:400;color:#555;transform:scaleX(1.0631)">Rename</span>
<span class="t" style="left:293.40px;top:490px;font-size:17.68px;line-height:17.68px;font-weight:400;color:#555;transform:scaleX(1.0312)">Assign User</span>
<span class="t" style="left:293.40px;top:532px;font-size:17.68px;line-height:17.68px;font-weight:400;color:#555;transform:scaleX(1.0300)">Assign Crew</span>
<span class="t" style="left:293.40px;top:574px;font-size:17.68px;line-height:17.68px;font-weight:400;color:#555;transform:scaleX(1.0544)">Assign Vehicle</span>
<span class="t" style="left:293.40px;top:616px;font-size:17.68px;line-height:17.68px;font-weight:400;color:#555;transform:scaleX(1.0425)">Assign Facility</span>
<span class="t" style="left:293.40px;top:658px;font-size:17.68px;line-height:17.68px;font-weight:400;color:#555;transform:scaleX(1.0630)">Assign Customer</span>
<span class="t" style="left:293.40px;top:700px;font-size:17.68px;line-height:17.68px;font-weight:400;color:#555;transform:scaleX(1.0640)">Assign Contract</span>
<span class="t" style="left:292.35px;top:742px;font-size:17.68px;line-height:17.68px;font-weight:400;color:#555;transform:scaleX(1.0533)">Reschedule</span>
<span class="t" style="left:292.31px;top:785px;font-size:17.68px;line-height:17.68px;font-weight:400;color:#555;transform:scaleX(1.0910)">Dispatch</span>
<span class="t" style="left:290.63px;top:824px;font-size:17.97px;line-height:17.97px;font-weight:400;color:#555;transform:scaleX(0.9747)">Manage Custom Data</span>
<svg style="left:252.00px;top:374.00px;" width="34.00" height="32.00" viewBox="0 0 34 32"><path d="M7.2 23 L9.6 14.6 C10.3 12.2 11.3 11.2 12.7 11.2 C14.3 11.2 15 12.6 14.8 14.6 L14.6 17 C14.4 19.2 14.8 20.2 15.9 20.2 C17 20.2 17.7 19.2 18.2 17.6 L21 9.4" fill="none" stroke="#555" stroke-width="3.2" stroke-linecap="round" stroke-linejoin="round"/>
<path d="M16.8 9.8 L22.4 4.6 L25.9 9.8Z" fill="#555"/>
<path d="M15.3 27.4 L24.2 18.5" stroke="#555" stroke-width="3.8" stroke-linecap="round"/>
<path d="M25.8 16.9 L27.9 14.8" stroke="#555" stroke-width="3.8"/></svg>
<svg style="left:259.90px;top:445.00px;" width="19.00" height="19.00" viewBox="0 0 19 19"><path d="M0.5 14.9 L0.5 18.4 L4 18.4 L14.2 8.2 L10.7 4.7Z" fill="#555"/><path d="M12 3.4 L13.8 1.6 C14.4 1 15.2 1 15.8 1.6 L17.3 3.1 C17.9 3.7 17.9 4.5 17.3 5.1 L15.5 6.9Z" fill="#555"/></svg>
<svg style="left:259.90px;top:487.40px;" width="19.00" height="19.00" viewBox="0 0 19 19"><circle cx="9.2" cy="5" r="4.6" fill="#555"/><path d="M0.4 18.3 C0.4 13.6 4.6 11.7 9.2 11.7 C13.8 11.7 18 13.6 18 18.3Z" fill="#555"/></svg>
<svg style="left:254.00px;top:524.00px;" width="32.00" height="28.00" viewBox="0 0 32 28"><path d="M7.8 5.2 L18.5 5.2 L19.5 6.2 L23 6.4 L26.6 11 L26.8 17 C26.6 19 25.2 19.8 23.4 19.8 C21.4 19.8 19.8 18.6 19 16.4 L18.4 12 C17.5 10 16.4 9.4 14 9.2 L11.6 8.4 L8.2 7.4Z" fill="#555"/>
<path d="M20 8.2 L22.6 8.2 L25.4 11.8 L20.6 11.4Z" fill="#fff"/>
<circle cx="22.6" cy="16.9" r="1.6" fill="#fff"/>
<circle cx="13.3" cy="14.6" r="3" fill="#555"/>
<path d="M7.6 23.3 C8 20.6 10.2 19.3 13.3 19.3 C16.4 19.3 18.6 20.6 19 23.3Z" fill="#555"/>
<path d="M7.6 14.2 L9.4 10.6" stroke="#555" stroke-width="2.4" stroke-linecap="round"/>
<path d="M4 19.6 C5.2 18.4 6.6 17.6 8.2 17.2" fill="none" stroke="#555" stroke-width="2.4" stroke-linecap="round"/></svg>
<svg style="left:258.90px;top:572.40px;" width="21.00" height="18.00" viewBox="0 0 21 18"><path d="M3.2 7.3 L5 1.6 C5.3 0.8 6 0.4 6.8 0.4 L14.2 0.4 C15 0.4 15.7 0.8 16 1.6 L17.8 7.3" fill="none" stroke="#555" stroke-width="2.2"/>
<rect x="0.6" y="6.6" width="19.8" height="7.6" rx="1.6" fill="#555"/>
<rect x="1.2" y="13" width="4" height="4.8" rx="0.8" fill="#555"/><rect x="15.8" y="13" width="4" height="4.8" rx="0.8" fill="#555"/>
<circle cx="4.6" cy="10.4" r="1.5" fill="#fff"/><circle cx="16.4" cy="10.4" r="1.5" fill="#fff"/></svg>
<svg style="left:258.90px;top:612.70px;" width="22.00" height="21.00" viewBox="0 0 22 21"><rect x="0.3" y="0.3" width="15" height="20" fill="#555"/>
<rect x="2.6" y="2.6" width="2.6" height="2.6" fill="#fff"/><rect x="6.7" y="2.6" width="2.6" height="2.6" fill="#fff"/><rect x="10.8" y="2.6" width="2.6" height="2.6" fill="#fff"/>
<rect x="2.6" y="7.2" width="2.6" height="2.6" fill="#fff"/><rect x="6.7" y="7.2" width="2.6" height="2.6" fill="#fff"/><rect x="10.8" y="7.2" width="2.6" height="2.6" fill="#fff"/>
<rect x="2.6" y="11.8" width="2.6" height="2.6" fill="#fff"/><rect x="6.7" y="11.8" width="2.6" height="2.6" fill="#fff"/>
<rect x="2.6" y="16.2" width="2.6" height="2.6" fill="#fff"/>
<circle cx="15.6" cy="15.2" r="6" fill="#fff"/>
<path d="M12.6 15.2 L14.8 17.4 L19.6 12.8" fill="none" stroke="#555" stroke-width="1.8"/></svg>
<svg style="left:258.90px;top:653.00px;" width="20.00" height="21.00" viewBox="0 0 20 21"><rect x="3.2" y="0.9" width="15.4" height="19.2" rx="1.2" fill="none" stroke="#555" stroke-width="1.9"/>
<path d="M10 0.9 V8 L12.2 6.4 L14.4 8 V0.9Z" fill="#555"/>
<path d="M1 4.8 H5 M1 10.5 H5 M1 16.2 H5" stroke="#555" stroke-width="1.8"/>
<circle cx="2.6" cy="4.8" r="1.6" fill="none" stroke="#555" stroke-width="1.2"/><circle cx="2.6" cy="10.5" r="1.6" fill="none" stroke="#555" stroke-width="1.2"/><circle cx="2.6" cy="16.2" r="1.6" fill="none" stroke="#555" stroke-width="1.2"/></svg>
<svg style="left:257.30px;top:696.50px;" width="24.00" height="21.00" viewBox="0 0 24 21"><path d="M16.6 8 V2 C16.6 1.4 16.2 1 15.6 1 H2 C1.4 1 1 1.4 1 2 V19.2 C1 19.8 1.4 20.2 2 20.2 H15.6" fill="none" stroke="#555" stroke-width="2"/>
<path d="M4.2 5.2 H12.4 M4.2 8.6 H8" stroke="#555" stroke-width="1.8"/>
<path d="M4.2 16.4 L5.6 12.6 L6.6 16.2 L8.4 13.6 L9.4 15.4" fill="none" stroke="#555" stroke-width="1.3"/>
<path d="M10.5 17.8 L11.4 14.2 L19.6 6 L22.4 8.8 L14.2 17Z" fill="#555"/></svg>
<svg style="left:258.40px;top:737.60px;" width="22.00" height="22.00" viewBox="0 0 22 22"><circle cx="10.95" cy="10.9" r="9.9" fill="none" stroke="#555" stroke-width="2.1"/><path d="M10.6 4.6 V11.6 L15.2 15" fill="none" stroke="#555" stroke-width="2"/></svg>
<svg style="left:258.40px;top:780.30px;" width="22.00" height="22.00" viewBox="0 0 22 22"><path d="M19.4 7 A9.9 9.9 0 1 1 14.8 1.6" fill="none" stroke="#555" stroke-width="2.2"/><path d="M5.6 10 L9.6 14 L19.8 3.6" fill="none" stroke="#555" stroke-width="2.3"/></svg>
<svg style="left:260.00px;top:821.50px;" width="20.00" height="21.00" viewBox="0 0 20 21"><rect x="0.3" y="1" width="2.4" height="2.4" fill="#555"/><rect x="4.2" y="1" width="9.6" height="2.4" fill="#555"/>
<rect x="0.3" y="5.6" width="2.4" height="2.4" fill="#555"/><rect x="4.2" y="5.6" width="9.6" height="2.4" fill="#555"/>
<rect x="0.3" y="10.2" width="2.4" height="2.4" fill="#555"/><rect x="4.2" y="10.2" width="7" height="2.4" fill="#555"/>
<path d="M6.6 20.6 L6.9 18 L16.4 8.5 L19 11.1 L9.5 20.6Z" fill="#555"/></svg>
<div style="position:absolute;left:687.10px;top:279.00px;width:694.90px;height:372.00px;box-sizing:border-box;background:#fff;border:3px solid #1b74e4;border-radius:3px;box-shadow:0 2px 7px rgba(0,0,0,0.3)"></div>
<span class="t" style="left:700.86px;top:303px;font-size:24.49px;line-height:24.49px;font-weight:400;color:#222;transform:scaleX(0.9712)">Manage Custom Data</span>
<svg style="left:1346.50px;top:306.50px;" width="15.00" height="15.00" viewBox="0 0 15 15"><path d="M1 1 L14 14 M14 1 L1 14" stroke="#555" stroke-width="2"/></svg>
<div style="position:absolute;left:690.00px;top:351.80px;width:689.00px;height:1.10px;background:#e8e8e8"></div>
<div style="position:absolute;left:739.90px;top:391.20px;width:590.10px;height:90.20px;box-sizing:border-box;background:#fff;border:1px solid #ececec;border-radius:6px;overflow:hidden"></div>
<div style="position:absolute;left:740.90px;top:392.20px;width:588.10px;height:36.90px;background:#f5f5f5;border-radius:5px 5px 0 0"></div>
<div style="position:absolute;left:740.90px;top:428.60px;width:588.10px;height:1.20px;background:#e4e4e4"></div>
<div style="position:absolute;left:1034.80px;top:392.20px;width:1.10px;height:88.20px;background:#ececec"></div>
<span class="t" style="left:754.33px;top:403px;font-size:16.96px;line-height:16.96px;font-weight:400;-webkit-text-stroke:0.45px #444;color:#444;transform:scaleX(0.9663)">Field Name</span>
<span class="t" style="left:1049.12px;top:403px;font-size:16.96px;line-height:16.96px;font-weight:400;-webkit-text-stroke:0.45px #444;color:#444;transform:scaleX(0.9829)">Data</span>
<svg style="left:744.00px;top:509.50px;" width="15.00" height="14.00" viewBox="0 0 15 14"><path d="M7.2 0 V13.3 M0.3 6.65 H14.4" stroke="#3b73d9" stroke-width="2"/></svg>
<span class="t" style="left:768.80px;top:509px;font-size:16.52px;line-height:16.52px;font-weight:400;-webkit-text-stroke:0.45px #3d76db;color:#3d76db;transform:scaleX(1.0580)">Add Field</span>
<div style="position:absolute;left:690.00px;top:573.00px;width:689.00px;height:1.10px;background:#e8e8e8"></div>
<div style="position:absolute;left:1180.00px;top:593.40px;width:80.20px;height:36.90px;box-sizing:border-box;background:#fff;border:1px solid #e6e6e6;border-radius:6px"></div>
<span class="t" style="left:1194.00px;top:605px;font-size:17.83px;line-height:17.83px;font-weight:400;-webkit-text-stroke:0.45px #444;color:#444;transform:scaleX(0.9491)">Cancel</span>
<div style="position:absolute;left:1270.80px;top:592.60px;width:94.90px;height:38.40px;background:#80b530;border-radius:6px"></div>
<span class="t" style="left:1299.50px;top:605px;font-size:17.83px;line-height:17.83px;font-weight:400;-webkit-text-stroke:0.45px #fff;color:#fff;transform:scaleX(0.9000)">Save</span>
<svg style="left:280.80px;top:215.20px;filter:drop-shadow(0 1px 1.5px rgba(0,0,0,0.25))" width="82.00" height="132.40" viewBox="0 0 82.0 132.40000000000003"><path d="M21.37 5.77 L60.63 5.77 L59.90 86.30 L75.74 84.87 L41.48 125.90 L6.27 84.86 L22.10 86.30Z" fill="#f04a2f" stroke="#f04a2f" stroke-width="5" stroke-linejoin="round"/></svg>
<svg style="left:127.40px;top:792.40px;filter:drop-shadow(0 1px 1.5px rgba(0,0,0,0.25))" width="132.50" height="80.60" viewBox="0 0 132.5 80.60000000000002"><path d="M5.77 21.17 L86.50 21.90 L85.06 6.26 L126.00 41.17 L85.09 74.35 L86.50 59.20 L5.77 59.93Z" fill="#f04a2f" stroke="#f04a2f" stroke-width="5" stroke-linejoin="round"/></svg>
<svg style="left:611.90px;top:475.00px;filter:drop-shadow(0 1px 1.5px rgba(0,0,0,0.25))" width="133.00" height="81.70" viewBox="0 0 133.0 81.70000000000005"><path d="M5.77 21.07 L87.10 21.80 L85.65 6.27 L126.50 41.48 L85.67 75.44 L87.10 59.30 L5.77 60.03Z" fill="#1c76e3" stroke="#1c76e3" stroke-width="5" stroke-linejoin="round"/></svg>
<svg style="left:1277.20px;top:621.90px;filter:drop-shadow(0 1px 1.5px rgba(0,0,0,0.25))" width="81.50" height="132.30" viewBox="0 0 81.5 132.30000000000007"><path d="M40.12 6.50 L75.22 45.37 L59.30 43.90 L60.03 126.53 L20.57 126.53 L21.30 43.90 L6.27 45.35Z" fill="#1c76e3" stroke="#1c76e3" stroke-width="5" stroke-linejoin="round"/></svg>
</body></html>
